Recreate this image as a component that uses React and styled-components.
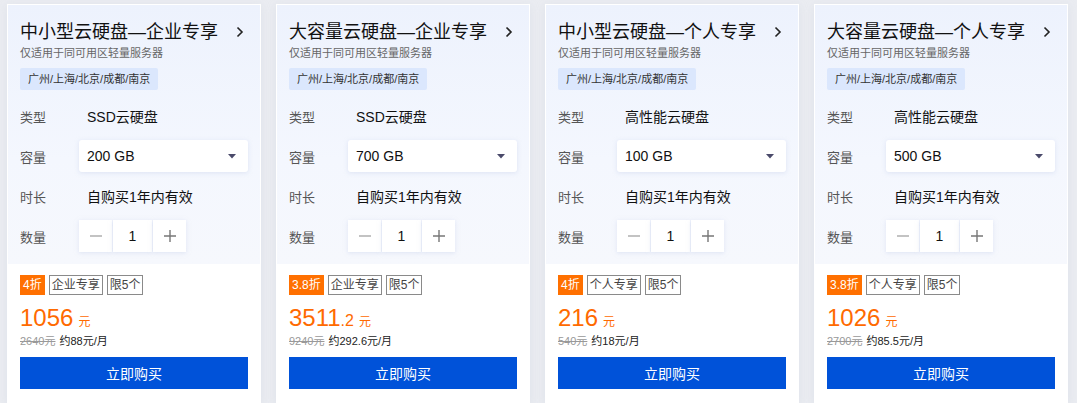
import React from "react";
import styled, { createGlobalStyle } from "styled-components";

const GlobalStyle = createGlobalStyle`
  html, body {
    margin: 0;
    padding: 0;
    background: #eaecf1;
    overflow: hidden;
  }
  body {
    font-family: "Liberation Sans", "Noto Sans CJK SC", sans-serif;
    color: #1f1f1f;
  }
  * {
    box-sizing: border-box;
  }
`;

const Page = styled.div`
  display: flex;
  gap: 15px;
  padding: 4px 7px 0;
`;

const Card = styled.div`
  width: 254px;
  flex: none;
  border: 1px solid #fff;
  background: #fff;
  box-shadow: 0 2px 8px rgba(200, 206, 220, 0.35);
`;

const Top = styled.div`
  padding: 14px 12px 12px;
  background: linear-gradient(180deg, #edf2fd 0%, #f4f7fe 60%, #f6f8fd 100%);
`;

const TitleRow = styled.div`
  display: flex;
  justify-content: space-between;
  align-items: center;
  height: 26px;
`;

const Title = styled.div`
  font-size: 18px;
  line-height: 26px;
  color: #111;
`;

const Chevron = styled.svg`
  width: 8px;
  height: 12px;
  margin-right: 4px;
`;

const Sub = styled.div`
  font-size: 11px;
  line-height: 16px;
  color: #666;
`;

const Region = styled.div`
  display: inline-block;
  margin-top: 7px;
  height: 22px;
  line-height: 22px;
  padding: 0 8px;
  font-size: 11px;
  color: #333;
  background: #dbe7fd;
  border-radius: 2px;
`;

const Rows = styled.div`
  display: flex;
  flex-direction: column;
  gap: 8px;
  margin-top: 10px;
`;

const Row = styled.div`
  display: flex;
  align-items: center;
  height: 32px;
`;

const Label = styled.div`
  width: 59px;
  flex: none;
  font-size: 13px;
  color: #555;
`;

const Value = styled.div`
  font-size: 14px;
  color: #111;
  padding-left: 8px;
`;

const Select = styled.div`
  flex: 1;
  height: 32px;
  display: flex;
  align-items: center;
  justify-content: space-between;
  padding: 0 12px 0 8px;
  background: #fff;
  border-radius: 3px;
  font-size: 14px;
  color: #111;
  box-shadow: 0 1px 4px rgba(200, 210, 235, 0.5);
`;

const Stepper = styled.div`
  display: flex;
  gap: 1px;
`;

const StepBtn = styled.div`
  width: ${p => (p.$wide ? "39px" : "33px")};
  height: 32px;
  display: flex;
  align-items: center;
  justify-content: center;
  background: #fff;
  font-size: 14px;
  color: #111;
  box-shadow: 0 1px 4px rgba(200, 210, 235, 0.5);
`;

const Bottom = styled.div`
  padding: 11px 12px 13px;
  background: #fff;
`;

const Tags = styled.div`
  display: flex;
  gap: 4px;
`;

const Tag = styled.span`
  height: 20px;
  line-height: 18px;
  padding: 0 2px;
  font-size: 12px;
  border: 1px solid ${p => (p.$hot ? "#ff7000" : "#8a8a8a")};
  background: ${p => (p.$hot ? "#ff7000" : "#fff")};
  color: ${p => (p.$hot ? "#fff" : "#444")};
`;

const Price = styled.div`
  margin-top: 8px;
  height: 30px;
  line-height: 30px;
  color: #ff6a00;
  font-size: 24px;
  white-space: nowrap;
`;

const Decimal = styled.span`
  font-size: 16px;
`;

const Yuan = styled.span`
  font-size: 12px;
  margin-left: 5px;
`;

const Monthly = styled.div`
  height: 16px;
  line-height: 16px;
  font-size: 11px;
  color: #222;
  s {
    color: #999;
    margin-right: 4px;
  }
`;

const BuyButton = styled.button`
  display: block;
  width: 100%;
  height: 32px;
  margin-top: 8px;
  border: none;
  border-radius: 0;
  background: #0052d9;
  color: #fff;
  font-family: inherit;
  font-size: 14px;
  cursor: pointer;
`;

const products = [
  { title: "中小型云硬盘—企业专享", type: "SSD云硬盘", size: "200 GB", off: "4折", tag: "企业专享", price: "1056", dec: "", orig: "2640元", month: "约88元/月" },
  { title: "大容量云硬盘—企业专享", type: "SSD云硬盘", size: "700 GB", off: "3.8折", tag: "企业专享", price: "3511", dec: ".2", orig: "9240元", month: "约292.6元/月" },
  { title: "中小型云硬盘—个人专享", type: "高性能云硬盘", size: "100 GB", off: "4折", tag: "个人专享", price: "216", dec: "", orig: "540元", month: "约18元/月" },
  { title: "大容量云硬盘—个人专享", type: "高性能云硬盘", size: "500 GB", off: "3.8折", tag: "个人专享", price: "1026", dec: "", orig: "2700元", month: "约85.5元/月" },
];

const App = () => {
  return (
    <Page>
      <GlobalStyle />
      {products.map(item => (
        <Card key={item.title}>
          <Top>
            <TitleRow>
              <Title>{item.title}</Title>
              <Chevron viewBox="0 0 8 12">
                <path d="M1.5 1.5 L6 6 L1.5 10.5" fill="none" stroke="#222" strokeWidth="1.6" />
              </Chevron>
            </TitleRow>
            <Sub>仅适用于同可用区轻量服务器</Sub>
            <Region>广州/上海/北京/成都/南京</Region>
            <Rows>
              <Row>
                <Label>类型</Label>
                <Value>{item.type}</Value>
              </Row>
              <Row>
                <Label>容量</Label>
                <Select>
                  <span>{item.size}</span>
                  <svg width="8" height="5" viewBox="0 0 8 5">
                    <path d="M0 0 H8 L4 4.5 Z" fill="#4a4a6a" />
                  </svg>
                </Select>
              </Row>
              <Row>
                <Label>时长</Label>
                <Value>自购买1年内有效</Value>
              </Row>
              <Row>
                <Label>数量</Label>
                <Stepper>
                  <StepBtn>
                    <svg width="12" height="12" viewBox="0 0 12 12">
                      <path d="M0 6 H12" stroke="#aaa" strokeWidth="1.4" />
                    </svg>
                  </StepBtn>
                  <StepBtn $wide>1</StepBtn>
                  <StepBtn>
                    <svg width="12" height="12" viewBox="0 0 12 12">
                      <path d="M0 6 H12 M6 0 V12" stroke="#777" strokeWidth="1.4" />
                    </svg>
                  </StepBtn>
                </Stepper>
              </Row>
            </Rows>
          </Top>
          <Bottom>
            <Tags>
              <Tag $hot>{item.off}</Tag>
              <Tag>{item.tag}</Tag>
              <Tag>限5个</Tag>
            </Tags>
            <Price>
              {item.price}
              {item.dec ? <Decimal>{item.dec}</Decimal> : null}
              <Yuan>元</Yuan>
            </Price>
            <Monthly>
              <s>{item.orig}</s>
              {item.month}
            </Monthly>
            <BuyButton>立即购买</BuyButton>
          </Bottom>
        </Card>
      ))}
    </Page>
  );
};

export default App;
